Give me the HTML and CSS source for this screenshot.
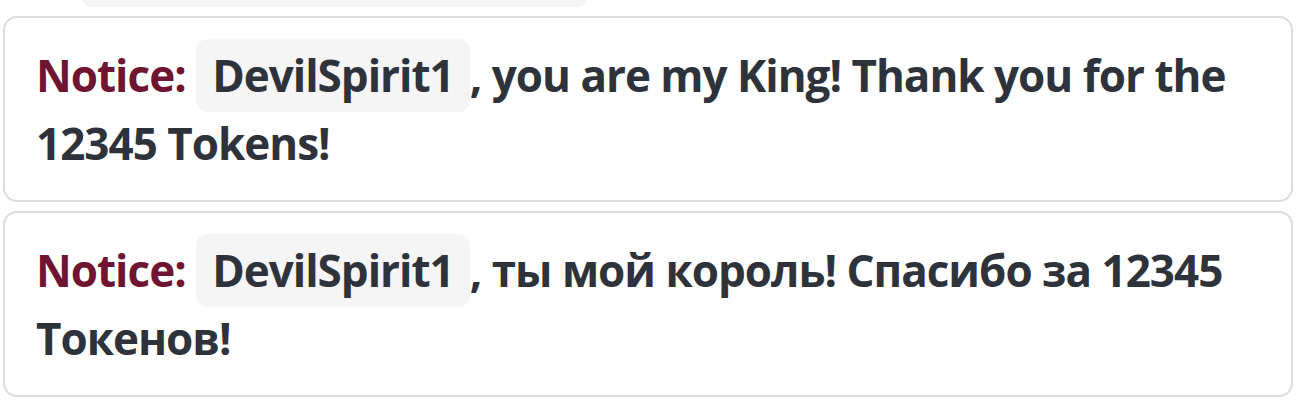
FILE: index.html
```html
<!DOCTYPE html>
<html lang="en">
<head>
<meta charset="utf-8">
<title>Notices</title>
<link rel="stylesheet" href="styles.css">
</head>
<body>
<div class="feed">
  <div class="prev-pill"></div>
  <div class="card">
    <p class="msg"><span class="label">Notice:</span> <span class="user">DevilSpirit1</span>, you are my King! Thank you for the 12345 Tokens!</p>
  </div>
  <div class="card">
    <p class="msg"><span class="label">Notice:</span> <span class="user">DevilSpirit1</span>, ты мой король! Спасибо за 12345 Токенов!</p>
  </div>
</div>
</body>
</html>
```
FILE: styles.css
```css
html, body {
  margin: 0;
  padding: 0;
  background: #ffffff;
}
body {
  font-family: "Open Sans", "Noto Sans", sans-serif;
  color: #2e323b;
}
.feed {
  display: flex;
  flex-direction: column;
  gap: 9px;
  padding: 0 3px;
}
.prev-pill {
  height: 7px;
  width: 503px;
  margin-left: 80px;
  background: #f5f5f5;
  border-radius: 0 0 12px 12px;
}
.card {
  border: 2px solid #dcdcdc;
  border-radius: 14px;
  padding: 23px 34px 23px 31px;
  background: #fff;
}
.msg {
  margin: 0;
  font-size: 44px;
  line-height: 68px;
  font-weight: 700;
  letter-spacing: -1px;
}
.label {
  color: #6f1431;
}
.user {
  background: #f5f5f5;
  border-radius: 12px;
  padding: 6px 16px 7px 16px;
}
```
